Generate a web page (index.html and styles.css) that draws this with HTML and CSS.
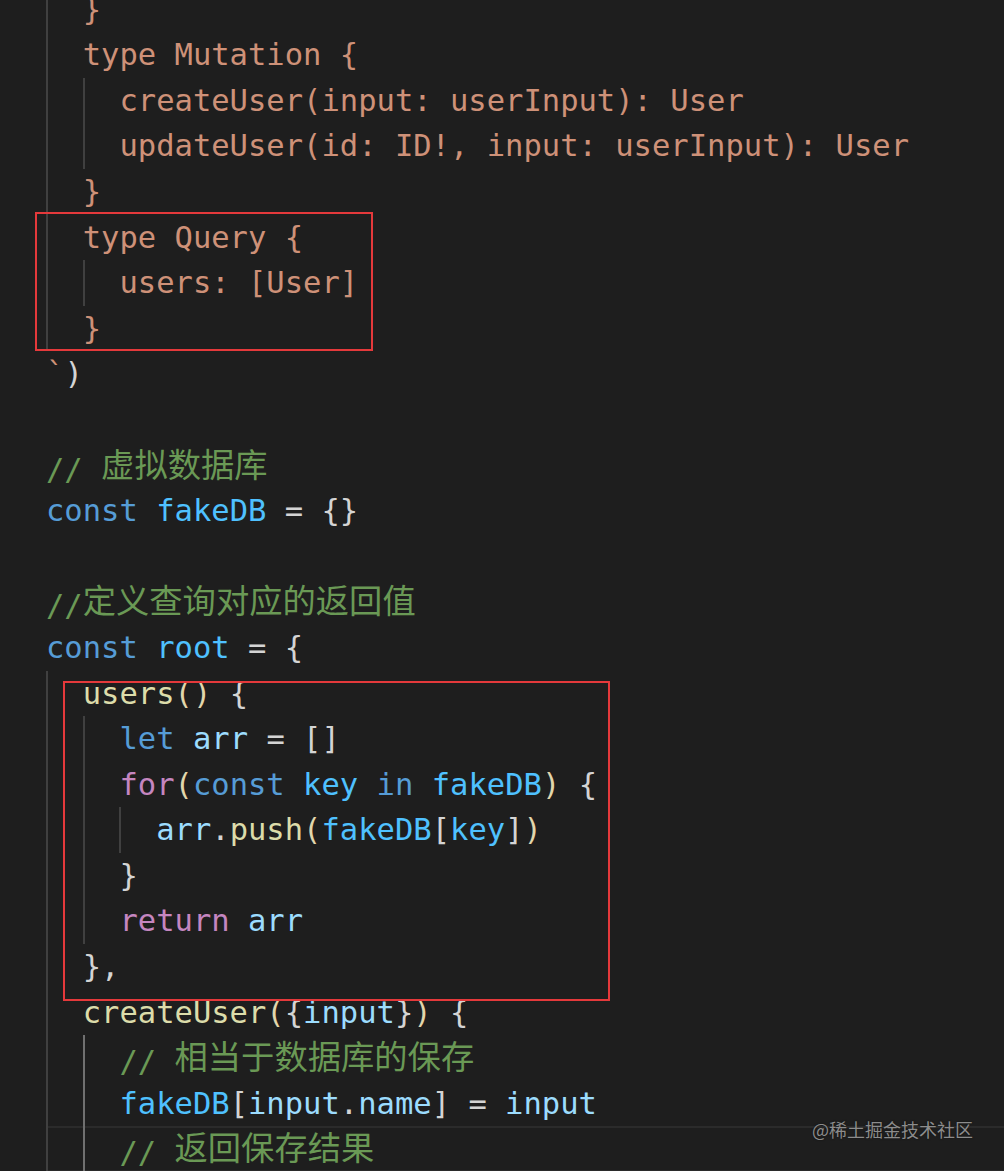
FILE: index.html
```html
<!DOCTYPE html>
<html lang="zh-CN">
<head>
<meta charset="utf-8">
<title>code</title>
<link rel="stylesheet" href="styles.css">
</head>
<body>
<div class="editor">
  <div class="lines">
    <div class="line"><div class="lc"><span class="g"></span><span class="code s">}</span></div></div>
    <div class="line"><div class="lc"><span class="g"></span><span class="code s">type Mutation {</span></div></div>
    <div class="line"><div class="lc"><span class="g"></span><span class="g"></span><span class="code s">createUser(input: userInput): User</span></div></div>
    <div class="line"><div class="lc"><span class="g"></span><span class="g"></span><span class="code s">updateUser(id: ID!, input: userInput): User</span></div></div>
    <div class="line"><div class="lc"><span class="g"></span><span class="code s">}</span></div></div>
    <div class="line"><div class="lc"><span class="g"></span><span class="code s">type Query {</span></div></div>
    <div class="line"><div class="lc"><span class="g"></span><span class="g"></span><span class="code s">users: [User]</span></div></div>
    <div class="line"><div class="lc"><span class="g"></span><span class="code s">}</span></div></div>
    <div class="line"><div class="lc"><span class="code"><span class="s">`</span><span class="p">)</span></span></div></div>
    <div class="line"><div class="lc"></div></div>
    <div class="line"><div class="lc"><span class="code c">// <span class="cjk">虚拟数据库</span></span></div></div>
    <div class="line"><div class="lc"><span class="code"><span class="k">const</span> <span class="cv">fakeDB</span> <span class="p">= {}</span></span></div></div>
    <div class="line"><div class="lc"></div></div>
    <div class="line"><div class="lc"><span class="code c">//<span class="cjk">定义查询对应的返回值</span></span></div></div>
    <div class="line"><div class="lc"><span class="code"><span class="k">const</span> <span class="cv">root</span> <span class="p">= {</span></span></div></div>
    <div class="line"><div class="lc"><span class="g"></span><span class="code"><span class="f">users</span><span class="b">()</span> <span class="p">{</span></span></div></div>
    <div class="line"><div class="lc"><span class="g"></span><span class="g"></span><span class="code"><span class="k">let</span> <span class="v">arr</span> <span class="p">= []</span></span></div></div>
    <div class="line"><div class="lc"><span class="g"></span><span class="g"></span><span class="code"><span class="x">for</span><span class="b">(</span><span class="k">const</span> <span class="cv">key</span> <span class="k">in</span> <span class="cv">fakeDB</span><span class="b">)</span> <span class="p">{</span></span></div></div>
    <div class="line"><div class="lc"><span class="g"></span><span class="g"></span><span class="g"></span><span class="code"><span class="v">arr</span><span class="p">.</span><span class="f">push</span><span class="b">(</span><span class="cv">fakeDB</span><span class="p">[</span><span class="cv">key</span><span class="p">]</span><span class="b">)</span></span></div></div>
    <div class="line"><div class="lc"><span class="g"></span><span class="g"></span><span class="code p">}</span></div></div>
    <div class="line"><div class="lc"><span class="g"></span><span class="g"></span><span class="code"><span class="x">return</span> <span class="v">arr</span></span></div></div>
    <div class="line"><div class="lc"><span class="g"></span><span class="code p">},</span></div></div>
    <div class="line"><div class="lc"><span class="g"></span><span class="code"><span class="f">createUser</span><span class="b">(</span><span class="p">{</span><span class="v">input</span><span class="p">}</span><span class="b">)</span> <span class="p">{</span></span></div></div>
    <div class="line"><div class="lc"><span class="g"></span><span class="g ga"></span><span class="code c">// <span class="cjk">相当于数据库的保存</span></span></div></div>
    <div class="line"><div class="lc"><span class="g"></span><span class="g ga"></span><span class="code"><span class="cv">fakeDB</span><span class="p">[</span><span class="v">input</span><span class="p">.</span><span class="v">name</span><span class="p">] = </span><span class="v">input</span></span></div></div>
    <div class="line"><div class="lc cur"><span class="g"></span><span class="g ga"></span><span class="code c">// <span class="cjk">返回保存结果</span></span></div></div>
  </div>
  <div class="mark mark-query"></div>
  <div class="mark mark-users"></div>
  <div class="watermark">@稀土掘金技术社区</div>
</div>
</body>
</html>
```

FILE: styles.css
```css
html, body {
  margin: 0;
  padding: 0;
  background: #1e1e1e;
}

.editor {
  position: relative;
  width: 1004px;
  height: 1171px;
  overflow: hidden;
  background: #1e1e1e;
  font-family: "DejaVu Sans Mono", "Noto Sans CJK SC", monospace;
  font-size: 30.5px;
  color: #d4d4d4;
}

.lines {
  display: flex;
  flex-direction: column;
  margin-top: -13.4px;
}

.line {
  display: flex;
  height: 45.6px;
  padding-left: 46px;
  flex: none;
}

.lc {
  flex: 1;
  display: flex;
  align-items: stretch;
}

.cur {
  box-shadow: inset 0 2px 0 #2b2b2b, inset 0 -2px 0 #2b2b2b;
}

.g {
  flex: none;
  width: 2ch;
  background: linear-gradient(#404040, #404040) left top / 2px 100% no-repeat;
}

.ga {
  background: linear-gradient(#707070, #707070) left top / 2px 100% no-repeat;
}

.code {
  white-space: pre;
  line-height: 45.6px;
}

.cjk {
  font-family: "Noto Sans CJK SC", sans-serif;
  font-size: 33.3px;
  line-height: 40px;
  vertical-align: 3px;
}

.s { color: #ce9178; }
.c { color: #6a9955; }
.k { color: #569cd6; }
.x { color: #c586c0; }
.f { color: #dcdcaa; }
.cv { color: #4fc1ff; }
.v { color: #9cdcfe; }
.p { color: #d4d4d4; }
.b { color: #e2d6ac; }

.mark {
  position: absolute;
  border: 2px solid #e5393b;
  box-sizing: border-box;
}

.mark-query {
  left: 35px;
  top: 212px;
  width: 338px;
  height: 139px;
}

.mark-users {
  left: 63px;
  top: 681px;
  width: 547px;
  height: 320px;
}

.watermark {
  position: absolute;
  left: 812px;
  top: 1116px;
  font-family: "Noto Sans CJK SC", sans-serif;
  font-size: 18px;
  line-height: 26px;
  color: #8c8c8c;
  text-shadow: 0 0 2px rgba(0, 0, 0, 0.6);
}
```
